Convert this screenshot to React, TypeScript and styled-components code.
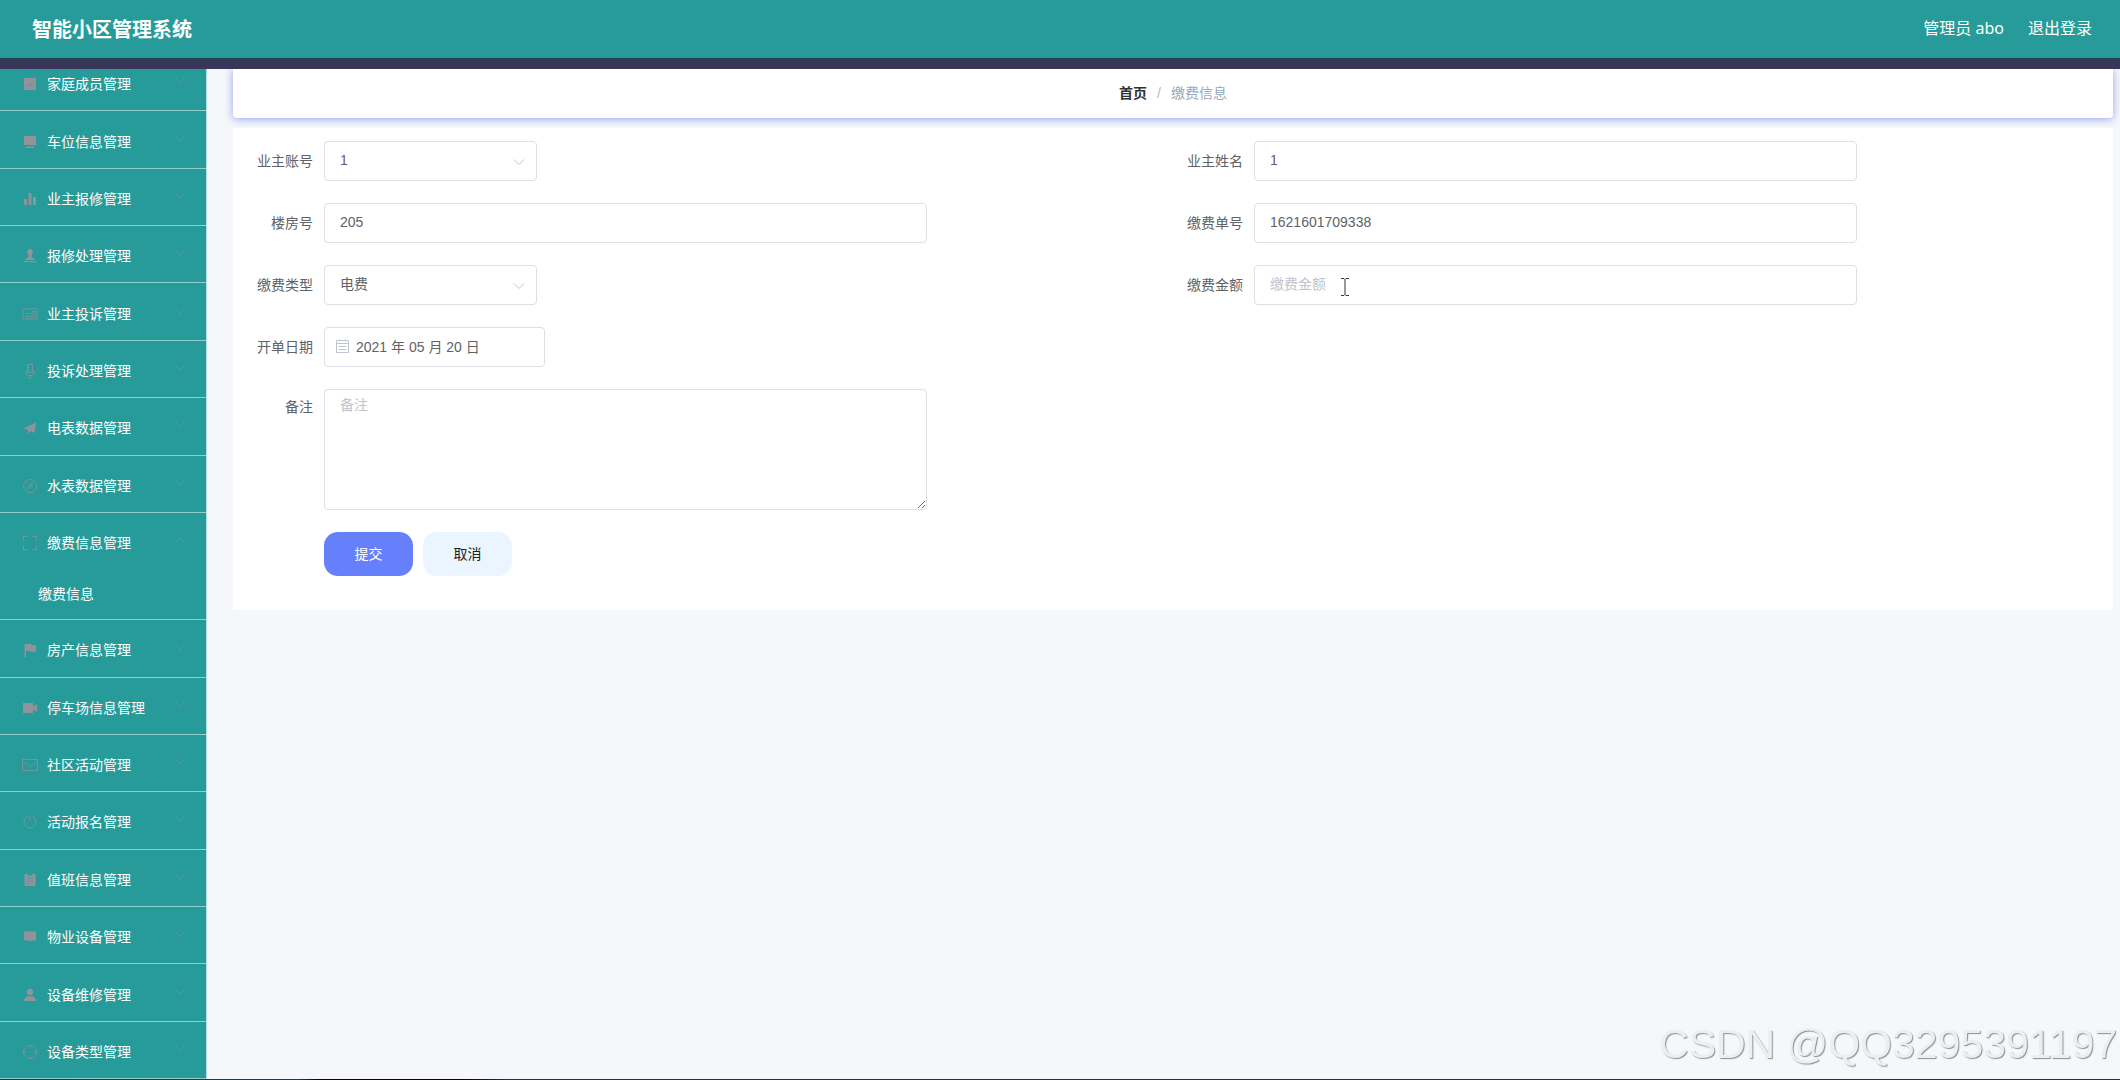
import React from "react";
import styled, { createGlobalStyle, css } from "styled-components";

const GlobalStyle = createGlobalStyle`
  *, *::before, *::after { box-sizing: border-box; }
  body {
    margin: 0;
    background: #f5f7fa;
    font-family: "Liberation Sans", "Noto Sans CJK SC", sans-serif;
    font-size: 14px;
    color: #606266;
  }
  button, input, select, textarea { font: inherit; }
`;

const Page = styled.div`
  display: flex;
  flex-direction: column;
  height: 100vh;
  overflow: hidden;
`;

const Header = styled.header`
  display: flex;
  flex: none;
  align-items: center;
  justify-content: space-between;
  height: 58px;
  padding: 0 28px 0 32px;
  background: #269b9a;
  color: #fff;
`;

const Title = styled.h1`
  margin: 0;
  padding-top: 2px;
  font-size: 20px;
  font-weight: 700;
  line-height: 30px;
`;

const Account = styled.div`
  display: flex;
  gap: 24px;
  padding-bottom: 2px;
  font-family: "Noto Sans", "Noto Sans CJK SC", sans-serif;
  font-size: 16px;
  line-height: 24px;
`;

const AccountLink = styled.a`
  color: inherit;
  text-decoration: none;
`;

const Strip = styled.div`
  flex: none;
  height: 11px;
  background: linear-gradient(#264057, #3a365a 45%, #3a365a);
`;

const Body = styled.div`
  display: flex;
  flex: 1;
  min-height: 0;
  overflow: hidden;
`;

const Sidebar = styled.nav`
  display: flex;
  flex: none;
  flex-direction: column;
  justify-content: flex-end;
  width: 207px;
  background: #269b9a;
  border-right: 1px solid #b4dcdf;
`;

const Menu = styled.ul`
  display: flex;
  flex: none;
  flex-direction: column;
  height: calc(100% + 15px);
  margin: 0;
  padding: 0;
  list-style: none;
`;

const MenuGroup = styled.li<{ $open?: boolean }>`
  display: flex;
  flex-direction: column;
  flex: 1 0 ${(p) => (p.$open ? "107px" : "57px")};
  border-bottom: 1px solid #8fcfcd;
`;

const MenuButton = styled.button`
  display: flex;
  flex: 1;
  align-items: center;
  padding: 4px 20px 0 22px;
  border: 0;
  background: none;
  color: #fff;
  line-height: 20px;
  text-align: left;
  cursor: pointer;
`;

const MenuIcon = styled.svg`
  flex: none;
  width: 16px;
  height: 16px;
  margin-right: 9px;
  color: #909399;
`;

const MenuText = styled.span`
  flex: 1;
`;

const MenuArrow = styled.svg`
  width: 12px;
  height: 12px;
  margin-bottom: 6px;
  color: #909399;
  opacity: 0.5;
`;

const SubLink = styled.a`
  height: 50px;
  padding-left: 38px;
  color: #fff;
  line-height: 50px;
  text-decoration: none;
`;

const Main = styled.main`
  display: flex;
  flex: 1;
  flex-direction: column;
  gap: 10px;
  min-width: 0;
  padding: 0 7px 0 26px;
`;

const Breadcrumb = styled.nav`
  display: flex;
  flex: none;
  align-items: center;
  justify-content: center;
  gap: 10px;
  height: 49px;
  padding-bottom: 1px;
  background: #fff;
  border-radius: 0 0 4px 4px;
  box-shadow: 0 1px 8px rgba(84, 100, 235, 0.6);
  line-height: 20px;
`;

const HomeLink = styled.a`
  color: #303133;
  font-weight: 700;
  text-decoration: none;
`;

const Separator = styled.span`
  color: #b4b8c0;
`;

const Current = styled.span`
  color: #97a8be;
`;

const Form = styled.form`
  position: relative;
  display: grid;
  grid-template-columns: 1fr 1fr;
  row-gap: 22px;
  padding: 13px 10px 34px;
  background: #fff;
`;

const Field = styled.div<{ $wide?: boolean }>`
  display: flex;
  align-items: flex-start;
  ${(p) => p.$wide && "grid-column: 1 / -1; width: 50%;"}
`;

const Label = styled.label<{ $tall?: boolean }>`
  flex: none;
  width: 81px;
  padding-right: 11px;
  line-height: ${(p) => (p.$tall ? "36px" : "40px")};
  text-align: right;
`;

const Control = styled.div<{ $width?: string }>`
  position: relative;
  width: ${(p) => p.$width ?? "71%"};
`;

const ControlArea = styled.div`
  flex: 1;
`;

const box = css`
  display: block;
  width: 100%;
  height: 40px;
  padding: 0 15px 2px;
  border: 1px solid #dcdfe6;
  border-radius: 4px;
  background: #fff;
  color: #606266;
  outline: none;

  &::placeholder {
    color: #c0c4cc;
    opacity: 1;
  }
`;

const Input = styled.input<{ $icon?: boolean }>`
  ${box}
  ${(p) => p.$icon && "padding-left: 31px;"}
`;

const Select = styled.select`
  ${box}
  appearance: none;
`;

const TextArea = styled.textarea`
  ${box}
  height: 121px;
  padding: 5px 15px;
  line-height: 21px;
  resize: vertical;
`;

const SelectArrow = styled.svg`
  position: absolute;
  top: 14px;
  right: 11px;
  width: 14px;
  height: 14px;
  color: #c0c4cc;
  pointer-events: none;
`;

const DateIcon = styled.svg`
  position: absolute;
  top: 12px;
  left: 11px;
  width: 15px;
  height: 15px;
  color: #c0c4cc;
  pointer-events: none;
`;

const Caret = styled.svg`
  position: absolute;
  top: 12px;
  left: 86px;
  width: 10px;
  height: 20px;
  color: #333;
  pointer-events: none;
`;

const Actions = styled.div`
  display: flex;
  grid-column: 1 / -1;
  gap: 10px;
  padding-left: 81px;
`;

const Button = styled.button<{ $primary?: boolean }>`
  width: 89px;
  height: 44px;
  padding: 0 0 2px;
  border: 0;
  border-radius: 14px;
  background: ${(p) => (p.$primary ? "#667ffa" : "#ebf5ff")};
  color: ${(p) => (p.$primary ? "#fff" : "#222")};
  cursor: pointer;
`;

const Watermark = styled.div`
  position: fixed;
  right: 3px;
  bottom: 6px;
  color: #eceef0;
  font-size: 41px;
  line-height: 60px;
  text-shadow: 1px 1px 1px #8e8e8e;
  pointer-events: none;
`;

const BottomEdge = styled.div`
  flex: none;
  height: 1px;
  background: linear-gradient(90deg, #123c46 0, #2c3a44 14%, #08080c 15%, #08080c 22%, #2e3238 24%, #2e3238);
`;

const line = { fill: "none", stroke: "currentColor", strokeWidth: 1 };
const thin = { ...line, opacity: 0.75 };

const icons: Record<string, React.ReactNode> = {
  check: (
    <>
      <rect x="2" y="2" width="12" height="12" rx="1" fill="currentColor" />
      <path d="M5 8l2.300 2.300L11.500 6" fill="none" stroke="#269b9a" opacity="0.6" />
    </>
  ),
  platform: <path d="M2 2h12v9H2zM4 12.500h8v1.500H4z" fill="currentColor" />,
  chart: <path d="M2 8h3v6H2zM6.500 2h3v12h-3zM11 6h3v8h-3z" fill="currentColor" />,
  custom: <path d="M8 1a3 3 0 0 1 2 5.200L9.500 9.500 13 11v1H3v-1l3.500-1.500L6 6.200A3 3 0 0 1 8 1zM2 13h12v1.200H2z" fill="currentColor" />,
  postcard: <path d="M1 3h14v10H1zM3.500 10.500h9M3.500 7.500h4M10 5.500h3v2.500h-3z" {...thin} />,
  mic: <path d="M5.500 1.500h5v8h-5zM5.500 4.500h2M5.500 7h2M3.500 8v2.500L6 12.500h4l2.500-2V8M8 12.500V15M6 15h4" {...thin} />,
  promotion: <path d="M1 8.500L14 2.500 12.500 13 8.500 11 6 14V9.800z" fill="currentColor" />,
  compass: (
    <g {...thin}>
      <circle cx="8" cy="8" r="6.500" />
      <path d="M10.800 5L9 9l-3.800 2L7 7z" />
    </g>
  ),
  full: <path d="M1.500 5.500v-4h4M10.500 1.500h4v4M14.500 10.500v4h-4M5.500 14.500h-4v-4" {...thin} />,
  flag: <path d="M2.500 2H9l.8 1.200H14v6.500H8.500L7.800 9H4v6H2.500z" fill="currentColor" />,
  camera: <path d="M1 3h10v3.500L15 4v8l-4-2.500V13H1z" fill="currentColor" />,
  message: <path d="M.5 2.500h15v11H.5zM1.500 4.500L8 9.500l6.500-5" {...thin} />,
  power: <path d="M5.500 2.500a6 6 0 1 0 5 0M8 1v6.500" {...thin} />,
  order: (
    <>
      <path d="M2.500 2H6v1.500h4V2h3.500v12h-11z" fill="currentColor" />
      <path d="M5 6.500h6M5 9h6M5 11.500h3" stroke="#269b9a" opacity="0.5" />
    </>
  ),
  comment: <path d="M2 2.500h12v9H9L8 13.500l-1-2H2z" fill="currentColor" />,
  user: (
    <g fill="currentColor">
      <circle cx="8" cy="5" r="3.200" />
      <path d="M2 14c0-3 2-4.500 4-4.800h4c2 .3 4 1.800 4 4.800z" />
    </g>
  ),
  help: (
    <g {...thin}>
      <circle cx="8" cy="8" r="6.500" />
      <path d="M8 1.500v3M8 11.500v3M1.500 8h3M11.500 8h3" />
    </g>
  ),
};

const menu: { text: string; icon: string; children?: string[] }[] = [
  { text: "家庭成员管理", icon: "check" },
  { text: "车位信息管理", icon: "platform" },
  { text: "业主报修管理", icon: "chart" },
  { text: "报修处理管理", icon: "custom" },
  { text: "业主投诉管理", icon: "postcard" },
  { text: "投诉处理管理", icon: "mic" },
  { text: "电表数据管理", icon: "promotion" },
  { text: "水表数据管理", icon: "compass" },
  { text: "缴费信息管理", icon: "full", children: ["缴费信息"] },
  { text: "房产信息管理", icon: "flag" },
  { text: "停车场信息管理", icon: "camera" },
  { text: "社区活动管理", icon: "message" },
  { text: "活动报名管理", icon: "power" },
  { text: "值班信息管理", icon: "order" },
  { text: "物业设备管理", icon: "comment" },
  { text: "设备维修管理", icon: "user" },
  { text: "设备类型管理", icon: "help" },
];

export default function App() {
  return (
    <Page>
      <GlobalStyle />
      <Header>
        <Title>智能小区管理系统</Title>
        <Account>
          <AccountLink href="#account">管理员 abo</AccountLink>
          <AccountLink href="#logout">退出登录</AccountLink>
        </Account>
      </Header>
      <Strip />
      <Body>
        <Sidebar>
          <Menu>
            {menu.map((item) => (
              <MenuGroup key={item.text} $open={!!item.children}>
                <MenuButton type="button" aria-expanded={!!item.children}>
                  <MenuIcon viewBox="0 0 16 16" aria-hidden="true">{icons[item.icon]}</MenuIcon>
                  <MenuText>{item.text}</MenuText>
                  <MenuArrow viewBox="0 0 12 12" aria-hidden="true">
                    <path d={item.children ? "M2 8l4-4 4 4" : "M2 4l4 4 4-4"} {...line} />
                  </MenuArrow>
                </MenuButton>
                {item.children?.map((child) => (
                  <SubLink key={child} href="#payment">{child}</SubLink>
                ))}
              </MenuGroup>
            ))}
          </Menu>
        </Sidebar>
        <Main>
          <Breadcrumb>
            <HomeLink href="#home">首页</HomeLink>
            <Separator>/</Separator>
            <Current>缴费信息</Current>
          </Breadcrumb>
          <Form onSubmit={(e) => e.preventDefault()}>
            <Field>
              <Label htmlFor="account">业主账号</Label>
              <ControlArea>
                <Control $width="213px">
                  <Select id="account" defaultValue="1">
                    <option>1</option>
                  </Select>
                  <SelectArrow viewBox="0 0 14 14" aria-hidden="true">
                    <path d="M2 4.500l5 5 5-5" {...line} />
                  </SelectArrow>
                </Control>
              </ControlArea>
            </Field>
            <Field>
              <Label htmlFor="owner">业主姓名</Label>
              <ControlArea>
                <Control>
                  <Input id="owner" defaultValue="1" />
                </Control>
              </ControlArea>
            </Field>
            <Field>
              <Label htmlFor="room">楼房号</Label>
              <ControlArea>
                <Control>
                  <Input id="room" defaultValue="205" />
                </Control>
              </ControlArea>
            </Field>
            <Field>
              <Label htmlFor="bill">缴费单号</Label>
              <ControlArea>
                <Control>
                  <Input id="bill" defaultValue="1621601709338" />
                </Control>
              </ControlArea>
            </Field>
            <Field>
              <Label htmlFor="kind">缴费类型</Label>
              <ControlArea>
                <Control $width="213px">
                  <Select id="kind" defaultValue="电费">
                    <option>电费</option>
                  </Select>
                  <SelectArrow viewBox="0 0 14 14" aria-hidden="true">
                    <path d="M2 4.500l5 5 5-5" {...line} />
                  </SelectArrow>
                </Control>
              </ControlArea>
            </Field>
            <Field>
              <Label htmlFor="amount">缴费金额</Label>
              <ControlArea>
                <Control>
                  <Input id="amount" placeholder="缴费金额" />
                  <Caret viewBox="0 0 10 20" aria-hidden="true">
                    <path d="M1 1.500h3l1 1 1-1h3M5 2.500v15M1 18.500h3l1-1 1 1h3" {...line} />
                  </Caret>
                </Control>
              </ControlArea>
            </Field>
            <Field $wide>
              <Label htmlFor="date">开单日期</Label>
              <ControlArea>
                <Control $width="221px">
                  <Input id="date" $icon defaultValue="2021 年 05 月 20 日" />
                  <DateIcon viewBox="0 0 15 15" aria-hidden="true">
                    <path d="M1.500 1.500h12v12h-12zM1.500 4.500h12M3.500 7.500h8M3.500 10.500h8M4.500 .5v2M10.500 .5v2" {...line} />
                  </DateIcon>
                </Control>
              </ControlArea>
            </Field>
            <Field $wide>
              <Label htmlFor="remark" $tall>备注</Label>
              <ControlArea>
                <Control>
                  <TextArea id="remark" placeholder="备注" />
                </Control>
              </ControlArea>
            </Field>
            <Actions>
              <Button type="submit" $primary>提交</Button>
              <Button type="button">取消</Button>
            </Actions>
          </Form>
        </Main>
      </Body>
      <BottomEdge />
      <Watermark>CSDN @QQ3295391197</Watermark>
    </Page>
  );
}
